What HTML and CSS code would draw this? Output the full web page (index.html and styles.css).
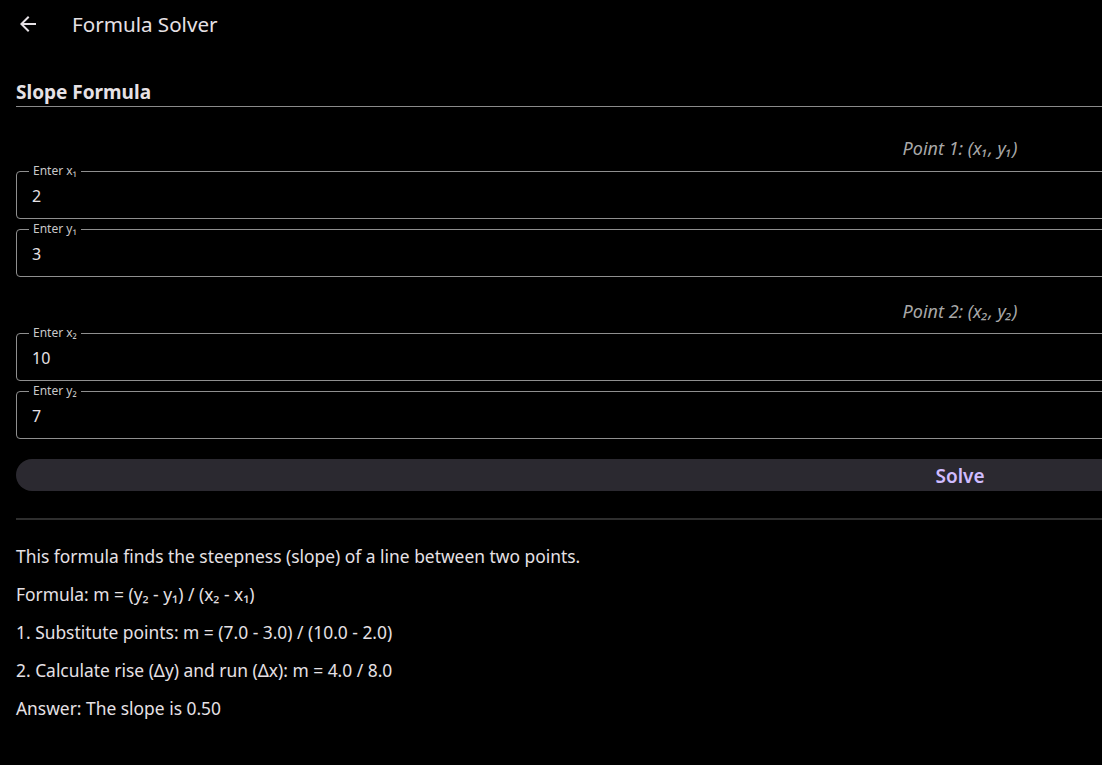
FILE: index.html
```html
<!DOCTYPE html>
<html lang="en">
<head>
    <meta charset="UTF-8">
    <meta name="viewport" content="width=device-width, initial-scale=1.0">
    <title>Formula Solver</title>
    <link rel="stylesheet" href="styles.css">
</head>
<body>
    <header class="app-bar">
        <button class="back-btn" type="button" aria-label="Back">
            <svg width="24" height="24" viewBox="0 0 24 24"><path fill="#e6e1e5" d="M20 11H7.83l5.59-5.59L12 4l-8 8 8 8 1.41-1.41L7.83 13H20v-2z"/></svg>
        </button>
        <h1 class="app-title">Formula Solver</h1>
    </header>

    <main class="content">
        <h2 class="section-title">Slope Formula</h2>

        <p class="point-label">Point 1: (x₁, y₁)</p>
        <fieldset class="field">
            <legend>Enter x₁</legend>
            <input type="text" value="2">
        </fieldset>
        <fieldset class="field">
            <legend>Enter y₁</legend>
            <input type="text" value="3">
        </fieldset>

        <p class="point-label second">Point 2: (x₂, y₂)</p>
        <fieldset class="field">
            <legend>Enter x₂</legend>
            <input type="text" value="10">
        </fieldset>
        <fieldset class="field">
            <legend>Enter y₂</legend>
            <input type="text" value="7">
        </fieldset>

        <button class="solve-btn" type="button">Solve</button>

        <hr class="divider">

        <div class="steps">
            <p>This formula finds the steepness (slope) of a line between two points.</p>
            <p>Formula: m = (y₂ - y₁) / (x₂ - x₁)</p>
            <p>1. Substitute points: m = (7.0 - 3.0) / (10.0 - 2.0)</p>
            <p>2. Calculate rise (Δy) and run (Δx): m = 4.0 / 8.0</p>
            <p>Answer: The slope is 0.50</p>
        </div>
    </main>
</body>
</html>
```

FILE: styles.css
```css
html, body {
    margin: 0;
    background-color: #000;
    overflow: hidden;
}
body {
    font-family: "Noto Sans", "Open Sans", sans-serif;
    color: #e6e1e5;
    width: 1102px;
    height: 765px;
}
.app-bar {
    display: flex;
    align-items: center;
    height: 48px;
    padding-left: 16px;
}
.back-btn {
    flex-shrink: 0;
    width: 24px;
    height: 24px;
    padding: 0;
    border: none;
    background: none;
    display: flex;
    align-items: center;
}
.app-title {
    margin: 0 0 0 32px;
    font-size: 20.6px;
    font-weight: 400;
    color: #e6e1e5;
}
.content {
    width: 1888px;
    padding: 30px 16px 0;
}
.section-title {
    margin: 0;
    font-size: 19px;
    font-weight: 700;
    line-height: 28px;
    border-bottom: 1.5px solid #8a8a8a;
}
.point-label {
    margin: 29px 0 4px;
    text-align: center;
    font-style: italic;
    font-size: 18px;
    line-height: 24px;
    color: #a8a8a8;
}
.point-label.second {
    margin: 22px 0 3px;
}
.field {
    margin: 3px 0 0;
    padding: 0 12px 12px;
    border: 1px solid #8f8f8f;
    border-radius: 4px;
}
.field legend {
    padding: 0 4px;
    font-size: 12px;
    line-height: 14px;
    color: #c8c8c8;
}
.field input {
    display: block;
    width: 100%;
    margin-top: 8px;
    padding: 0 3px;
    border: none;
    background: none;
    color: #e6e1e5;
    font-family: inherit;
    font-size: 16px;
    line-height: 20px;
    height: 20px;
    outline: none;
    box-sizing: border-box;
}
.solve-btn {
    display: block;
    width: 100%;
    height: 32px;
    margin-top: 20px;
    padding-top: 3px;
    border: none;
    border-radius: 16px;
    background-color: #2b2930;
    color: #d0bcff;
    font-family: inherit;
    font-size: 19px;
    font-weight: 600;
}
.divider {
    margin: 27px 0 0;
    border: none;
    border-top: 2px solid #2e2e2e;
}
.steps {
    padding-top: 24px;
}
.steps p {
    margin: 0 0 13px;
    font-size: 17.4px;
    line-height: 25px;
    color: #e6e1e5;
}
```
